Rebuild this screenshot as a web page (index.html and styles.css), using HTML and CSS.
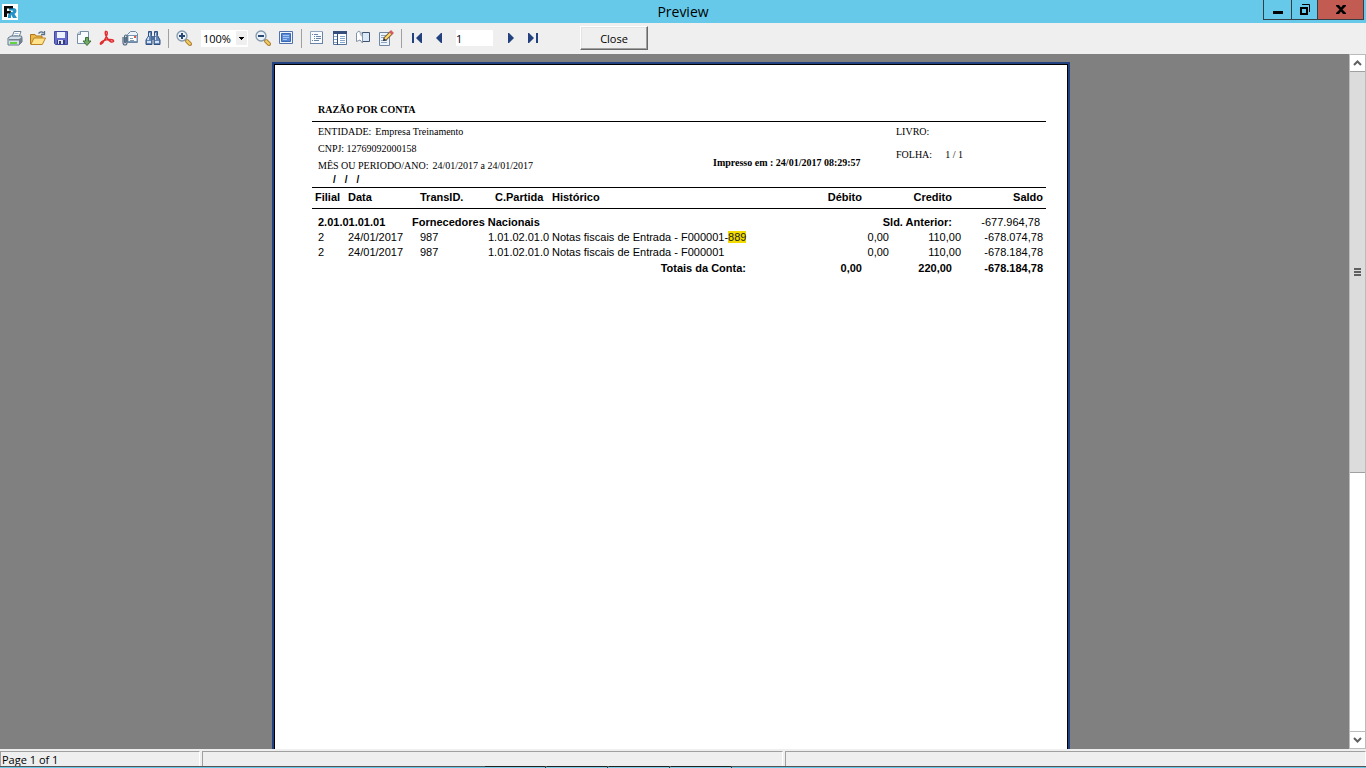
FILE: index.html
```html
<!DOCTYPE html>
<html lang="pt-BR">
<head>
<meta charset="utf-8">
<title>Preview</title>
<link rel="stylesheet" href="styles.css">
</head>
<body>
<header class="titlebar">
  <svg class="app-icon" viewBox="0 0 16 16" aria-hidden="true"><path fill="#fff" d="M0 0h16v16H0z"/><path fill="#2593c8" d="M7 4h4q3.500 0 3.500 3 0 2-2 3l2.500 4h-4l-2-3.500V14H6v-3l2-3h2.500q1-.5 0-1.500H7z"/><path fill="#0a0a0a" d="M2 2h9v2.500H5V7h4L8 9.500H5V13H2z"/></svg>
  <h1 class="title">Preview</h1>
  <div class="window-controls">
    <button class="win-btn" aria-label="Minimize"><svg width="12" height="12"><path d="M1 7h10v3H1z"/></svg></button>
    <button class="win-btn restore" aria-label="Restore"><svg width="12" height="12" fill="none" stroke="#000"><path stroke-width="2" d="M2 4h6v6H2z"/><path d="M3 .5h7.500V8"/></svg></button>
    <button class="win-btn close-x" aria-label="Close window"><svg width="12" height="12"><path d="M1 1h3l2 2.500L8 1h3v1L7.500 5.500 11 9v1H8L6 7.500 4 10H1V9l3.500-3.500L1 2z"/></svg></button>
  </div>
</header>

<nav class="toolbar" aria-label="Preview tools">
  <button class="tool" aria-label="Print"><svg viewBox="0 0 16 16"><path fill="#fff" stroke="#6d8195" d="M5 7l2-5.500h7L12 7z"/><path stroke="#a9bfd3" d="M7.500 3.500h4M7 5.500h4"/><path fill="#d5dfe7" stroke="#65798b" d="M1 8l3-2h10.500L15 8v4l-3 3H1z"/><path fill="#73828e" d="M2 9h10v1.500H2zM12 9l3-2v5l-3 3z"/><path fill="#62d441" d="M3 12h7v2H3z"/></svg></button>
  <button class="tool" aria-label="Open"><svg viewBox="0 0 16 16"><path fill="#eab849" stroke="#af7517" d="M.5 14V4.500H5l1 1.500h6v3"/><path fill="#ffe28a" stroke="#bb8423" d="M.8 14.500L4 8h11.500l-3.200 6.500z"/><path fill="none" stroke="#58718d" stroke-width="1.300" d="M8.500 3.500Q11 .5 13.500 3M14.500 1v3.500H11"/></svg></button>
  <button class="tool" aria-label="Save"><svg viewBox="0 0 16 16"><path fill="#696bcb" stroke="#4047a1" d="M1.500 1.500h13v13h-12l-1-1z"/><path fill="#eef4ff" d="M4 2h8v6H4z"/><path fill="#363c79" d="M4 10h8v4H4z"/><path fill="#dfe5ef" d="M5 10h5v4H5z"/><path fill="#363c79" d="M6 11h2v3H6z"/></svg></button>
  <button class="tool" aria-label="Export"><svg viewBox="0 0 16 16"><path fill="#f8fbff" stroke="#7890a7" d="M4 1.500h8.500v12h-11V4z"/><path fill="#c1d3e3" stroke="#7890a7" d="M1.500 4.500h3v-3"/><path fill="#71a868" stroke="#3c7137" d="M9.500 7.500h3V11h2.500L11 15.500 7 11h2.500z"/></svg></button>
  <button class="tool" aria-label="Export to PDF"><svg viewBox="0 0 16 16" fill="none" stroke="#e22d30" stroke-width="1.500"><path d="M6.500 1.500Q9 1 8 4.500 7 9 3.500 13 1 15.500 1.500 13 3 10 11 9.500q4 0 3.500 2-2.500 2-6-3Q5.500 4 6.500 1.500z"/></svg></button>
  <button class="tool" aria-label="Send by e-mail"><svg viewBox="0 0 16 16"><path fill="#edf3f8" stroke="#6e88a4" d="M5.500 4.500l3-3h5l2 2v9h-10z"/><path fill="#fff" stroke="#7896b5" d="M6 5.500h9v6H6z"/><path fill="#dd5b49" d="M12 6h2v2h-2z"/><path stroke="#8499af" d="M8 8.500h3M8 10.500h4"/><path fill="none" stroke="#536a81" stroke-width="1.200" d="M1 7v5.500Q1 15 3 15t2-2.500v-6Q5 5 3.800 5T2.500 6.500v5Q2.500 13 3 13t.8-1.500V7"/></svg></button>
  <button class="tool" aria-label="Find"><svg viewBox="0 0 16 16"><path fill="#6587b6" stroke="#30517f" d="M3.500 1.500h3v4L7 8v6.500H1V10l2.500-4zM9.500 1.500h3v4L15 10v4.500H9V8l.5-2.500z"/><path fill="#4e709f" d="M7 6h2v4H7z"/><path fill="#d3e3f5" d="M4 3h1v3H4zM10 3h1v3h-1zM3 7h1v3H2zM10 7h1v3h-1zM2 11h4v2H2zM10 11h4v2h-4z"/></svg></button>
  <span class="separator"></span>
  <button class="tool" aria-label="Zoom in"><svg viewBox="0 0 16 16"><path stroke="#ae8035" stroke-width="4" stroke-linecap="round" d="M11 11l3 3"/><path stroke="#f2d05f" stroke-width="2" d="M10.500 10.500l4 4"/><circle cx="6" cy="6" r="5" fill="#eaf2f9" stroke="#8499ac" stroke-width="1.300"/><path stroke="#294973" stroke-width="2" d="M3 6h6M6 3v6"/></svg></button>
  <div class="zoom-box">
    <select class="zoom-select" aria-label="Zoom"><option>100%</option></select>
    <svg class="zoom-arrow" width="11" height="14" aria-hidden="true"><path fill="#efefef" d="M0 0h11v14H0z"/><path d="M3 6h5v1H7v1H6v1H5V8H4V7H3z"/></svg>
  </div>
  <button class="tool" aria-label="Zoom out"><svg viewBox="0 0 16 16"><path stroke="#ae8035" stroke-width="4" stroke-linecap="round" d="M11 11l3 3"/><path stroke="#f2d05f" stroke-width="2" d="M10.500 10.500l4 4"/><circle cx="6" cy="6" r="5" fill="#eaf2f9" stroke="#8499ac" stroke-width="1.300"/><path stroke="#294973" stroke-width="2" d="M3 6h6"/></svg></button>
  <button class="tool" aria-label="Full screen"><svg viewBox="0 0 16 16"><path fill="#f2f6fc" stroke="#5273aa" d="M1.500 1.500h13v12h-13z"/><path fill="#5789d5" stroke="#3969b5" d="M3.500 3.500h9v8h-9z"/><path stroke="#a5c5f3" d="M5 5.500h6M5 7.500h6M5 9.500h4"/></svg></button>
  <span class="separator"></span>
  <button class="tool" aria-label="Outline"><svg viewBox="0 0 16 16"><path fill="#f9fbff" stroke="#91a6bd" d="M1.500 1.500h12v12h-12z"/><path fill="none" stroke="#6783a6" d="M1 13.500h13M13.500 2v12M3 4.500h1M5 4.500h4M5 6.500h1M7 6.500h5M5 8.500h1M7 8.500h5M3 10.500h1M5 10.500h5"/></svg></button>
  <button class="tool" aria-label="Thumbnails"><svg viewBox="0 0 16 16"><path fill="#fff" stroke="#58739b" d="M1.500 1.500h13v13h-13z"/><path fill="#354f7c" d="M1 1h14v3H1zM5 4h1v11H5z"/><path stroke="#84a5cb" d="M2 6.500h3M2 9.500h3M2 12.500h3M8 6.500h5M8 8.500h5M8 10.500h5M8 12.500h5"/></svg></button>
  <button class="tool" aria-label="Page settings"><svg viewBox="0 0 16 16"><path fill="#dce9f8" stroke="#3f5272" d="M7.500 2.500h7v9h-7z"/><path fill="#fff" stroke="#8393a6" d="M1.500 11.500V3L4 1l3.500 3v9L5 10z"/><path fill="#b6c5d3" d="M4 1l3 3v3L5 5z"/></svg></button>
  <button class="tool" aria-label="Edit page"><svg viewBox="0 0 16 16"><path fill="#edf4fc" stroke="#7188a5" d="M1.500 2.500h10v13h-10z"/><path stroke="#8da4c2" d="M3 5.500h5M3 7.500h4M3 10.500h6M3 12.500h6"/><path stroke="#806135" stroke-width="4" d="M7 9l6-6"/><path stroke="#ffdd68" stroke-width="2" d="M7 9l6-6"/><path stroke="#d15c62" stroke-width="4" d="M12.500 3.500l2-2"/><path fill="#333" d="M5.500 7.500L8.500 10.500 5 11z"/></svg></button>
  <span class="separator"></span>
  <button class="tool" aria-label="First page"><svg viewBox="0 0 16 16" fill="#21417f"><path d="M3 3h2v10H3zM13 3v10h-1L7 8l5-5z"/></svg></button>
  <button class="tool" aria-label="Previous page"><svg viewBox="0 0 16 16" fill="#21417f"><path d="M10 3v10H9L4 8l5-5z"/></svg></button>
  <input class="page-number" type="text" value="1" aria-label="Page number">
  <button class="tool" aria-label="Next page"><svg viewBox="0 0 16 16" fill="#21417f"><path d="M5 3v10h1l5-5-5-5z"/></svg></button>
  <button class="tool" aria-label="Last page"><svg viewBox="0 0 16 16" fill="#21417f"><path d="M2 3v10h1l5-5-5-5zM10 3h2v10h-2z"/></svg></button>
  <button class="close-btn">Close</button>
</nav>

<main class="workspace">
  <div class="canvas">
    <article class="paper">
      <h2 class="report-title">RAZÃO POR CONTA</h2>
      <section class="report-info">
        <div class="info-main">
          <p class="entity">ENTIDADE:<span>Empresa Treinamento</span></p>
          <p>CNPJ: 12769092000158</p>
          <p class="period">MÊS OU PERIODO/ANO:<span>24/01/2017 a 24/01/2017</span></p>
          <p class="slashes"><span>/</span><span>/</span><span>/</span></p>
        </div>
        <p class="printed">Impresso em : 24/01/2017 08:29:57</p>
        <div class="info-side">
          <p>LIVRO:</p>
          <p class="sheet">FOLHA:<span>1 / 1</span></p>
        </div>
      </section>
      <table class="ledger">
        <colgroup><col class="c-branch"><col class="c-date"><col class="c-trans"><col class="c-contra"><col class="c-history"><col class="c-debit"><col class="c-credit"><col class="c-balance"></colgroup>
        <thead>
          <tr><th>Filial</th><th>Data</th><th class="trans">TransID.</th><th class="contra">C.Partida</th><th>Histórico</th><th class="num debit">Débito</th><th class="num credit">Credito</th><th class="num">Saldo</th></tr>
        </thead>
        <tbody>
          <tr class="account"><th class="branch" colspan="2">2.01.01.01.01</th><th colspan="3">Fornecedores Nacionais</th><th class="num credit" colspan="2">Sld. Anterior:</th><td class="num opening">-677.964,78</td></tr>
          <tr><td class="branch">2</td><td>24/01/2017</td><td class="trans">987</td><td>1.01.02.01.0</td><td>Notas fiscais de Entrada - F000001-<mark>889</mark></td><td class="num">0,00</td><td class="num">110,00</td><td class="num">-678.074,78</td></tr>
          <tr><td class="branch">2</td><td>24/01/2017</td><td class="trans">987</td><td>1.01.02.01.0</td><td>Notas fiscais de Entrada - F000001</td><td class="num">0,00</td><td class="num">110,00</td><td class="num">-678.184,78</td></tr>
        </tbody>
        <tfoot>
          <tr><th class="num" colspan="5">Totais da Conta:</th><th class="num debit">0,00</th><th class="num credit">220,00</th><th class="num">-678.184,78</th></tr>
        </tfoot>
      </table>
    </article>
  </div>
  <div class="scrollbar">
    <button class="scroll-btn" aria-label="Scroll up"><svg width="9" height="6" fill="none" stroke="#606060" stroke-width="2"><path d="M1 5l3.500-3.500L8 5"/></svg></button>
    <div class="thumb"><span class="grip"></span></div>
    <div class="track"></div>
    <button class="scroll-btn" aria-label="Scroll down"><svg width="9" height="6" fill="none" stroke="#606060" stroke-width="2"><path d="M1 1l3.500 3.500L8 1"/></svg></button>
  </div>
</main>

<footer class="statusbar">
  <div class="status page-status">Page 1 of 1</div>
  <div class="status middle-status"></div>
  <div class="status last-status"></div>
</footer>
<div class="taskbar"><span></span><span></span><span></span><span></span></div>
</body>
</html>
```
FILE: styles.css
```css
* { box-sizing: border-box; }
body {
  margin: 0;
  height: 100vh;
  display: flex;
  flex-direction: column;
  overflow: hidden;
  background: #efefef;
  color: #000;
  font: 11px "Open Sans", "Noto Sans", sans-serif;
}
h1, h2, p { margin: 0; }
button, input, select { font: inherit; color: inherit; border: 0; border-radius: 0; padding: 0; }

/* Title bar */
.titlebar {
  height: 23px;
  flex: none;
  display: grid;
  grid-template-columns: 1fr auto 1fr;
  align-items: center;
  background: #66c9ea;
}
.app-icon { width: 16px; height: 16px; margin-left: 2px; }
.title { font-size: 14px; font-weight: 400; line-height: 23px; }
.window-controls {
  justify-self: end;
  align-self: start;
  display: flex;
  height: 20px;
  margin-right: 2px;
  border: solid #333f45;
  border-width: 0 1px 1px;
}
.win-btn {
  width: 28px;
  display: grid;
  place-items: center;
  background: transparent;
  border-right: 1px solid #333f45;
}
.restore { width: 26px; }
.close-x { width: 45px; background: #c25b52; border-right: 0; }

/* Toolbar */
.toolbar {
  height: 31px;
  flex: none;
  display: flex;
  align-items: center;
  padding: 0 0 1px 3px;
}
.tool {
  width: 23px;
  height: 22px;
  flex: none;
  display: grid;
  place-items: center;
  background: transparent;
}
.tool svg { width: 16px; height: 16px; }
.separator { width: 1px; height: 19px; margin: 0 3px 0 4px; background: #a0a0a0; }
.zoom-box { position: relative; height: 17px; margin: 0 3px 0 6px; background: #fff; }
.zoom-select {
  display: block;
  width: 47px;
  height: 17px;
  padding-left: 2px;
  appearance: none;
  background: #fff;
}
.zoom-arrow { position: absolute; right: 1px; top: 1px; pointer-events: none; }
.page-number { width: 37px; height: 16px; margin: 0 6px 0 5px; background: #fff; }
.close-btn {
  width: 68px;
  height: 24px;
  margin-left: 35px;
  background: #efefef;
  border: 1px solid;
  border-color: #fff #696969 #696969 #fff;
  box-shadow: inset -1px -1px #a0a0a0, inset 1px 1px #e3e3e3;
}

/* Preview area */
.workspace { flex: 1; min-height: 0; display: flex; background: #808080; }
.canvas {
  flex: 1;
  min-width: 0;
  display: flex;
  justify-content: center;
  padding: 8px 7px 0 0;
  overflow: hidden;
}
.paper {
  width: 100%;
  max-width: 798px;
  padding: 37px 22px 0 38px;
  background: #fff;
  border: solid #21417f;
  border-width: 2px 2px 0;
  box-shadow: inset 0 1px #000, inset 1px 0 #000, inset -1px 0 #000;
  font-family: "Liberation Serif", serif;
  font-size: 10px;
}
.report-title {
  padding-left: 6px;
  height: 21px;
  line-height: 18px;
  font-size: 10px;
  border-bottom: 1px solid #000;
}
.report-info { display: flex; height: 65px; padding: 1px 6px 0; line-height: 17px; }
.info-main { flex: 1; }
.entity span { margin-left: 4px; }
.period span { margin-left: 4px; }
.slashes {
  display: flex;
  gap: 9px;
  padding-left: 15px;
  font: bold 10px/11px "Liberation Sans", sans-serif;
}
.printed { width: 183px; padding-top: 31px; font-weight: 700; }
.info-side { width: 144px; }
.sheet { padding-top: 6px; }
.sheet span { margin-left: 13px; }

.ledger {
  width: 100%;
  table-layout: fixed;
  border-collapse: collapse;
  font: 11px/15px "Liberation Sans", sans-serif;
}
.c-branch { width: 33px; }
.c-date { width: 64px; }
.c-trans { width: 76px; }
.c-contra { width: 64px; }
.c-history { width: 200px; }
.c-debit { width: 143px; }
.c-credit { width: 72px; }
.c-balance { width: 82px; }
.ledger th, .ledger td { padding: 0 3px; text-align: left; white-space: nowrap; }
.ledger thead th { height: 21px; padding-bottom: 2px; border: solid #000; border-width: 1px 0; }
.ledger .account th, .ledger .account td { padding-top: 6px; }
.ledger tfoot th { padding-top: 1px; }
.ledger .branch { padding-left: 6px; }
.ledger .trans { padding-left: 11px; }
.ledger .contra { padding-left: 10px; }
.ledger .num { text-align: right; }
.ledger .debit { padding-right: 30px; }
.ledger .credit { padding-right: 12px; }
.ledger .opening { padding-right: 6px; }
mark { background: #f2dc00; color: #222; }

/* Scroll bar */
.scrollbar {
  width: 17px;
  flex: none;
  display: flex;
  flex-direction: column;
  background: #fff;
  border: 1px solid #bbb;
}
.scroll-btn { height: 16px; flex: none; display: grid; place-items: center; background: #fff; }
.thumb {
  flex: 401;
  display: grid;
  place-items: center;
  background: #dcdcdc;
  border: solid #a0a0a0;
  border-width: 1px 0;
}
.track { flex: 259; border-bottom: 1px solid #bbb; }
.grip { width: 7px; height: 8px; background: repeating-linear-gradient(#606060 0 2px, #dcdcdc 2px 3px); }

/* Status bar */
.statusbar { height: 17px; flex: none; display: flex; gap: 2px; padding-top: 2px; }
.status { border: solid #a0a0a0; border-width: 1px 0 0 1px; border-right: 1px solid #fff; }
.page-status { width: 200px; padding-left: 1px; line-height: 15px; }
.middle-status { width: 581px; }
.last-status { flex: 1; }
.taskbar {
  height: 2px;
  flex: none;
  display: flex;
  justify-content: center;
  gap: 2px;
  padding-right: 150px;
  background: #66c9ea;
  border-top: 1px solid #555;
}
.taskbar span { width: 60px; background: #7fd0ea; box-shadow: 0 -1px #222, 1px 0 #333; }
```
